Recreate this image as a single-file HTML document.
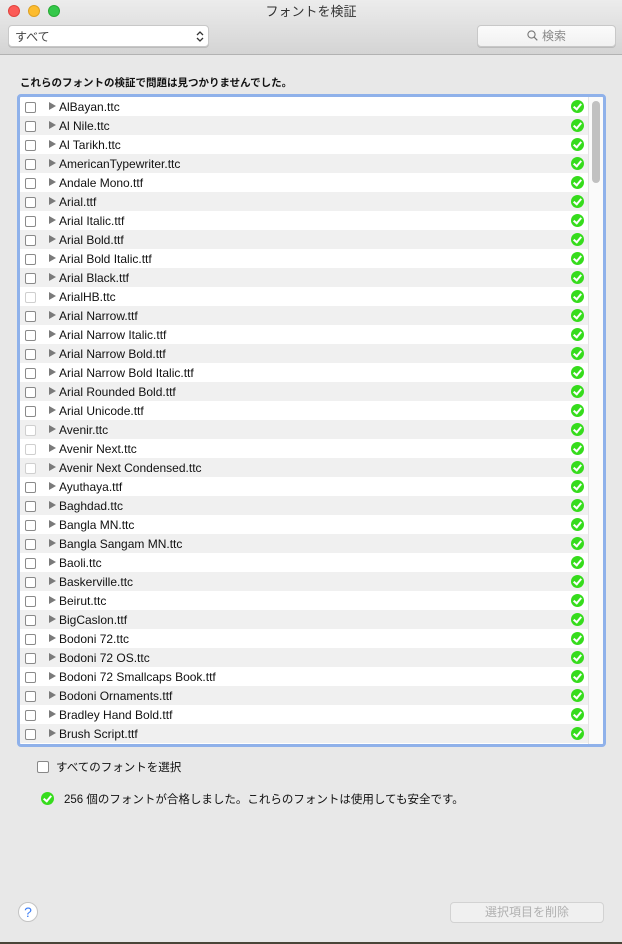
<!DOCTYPE html>
<html><head><meta charset="utf-8">
<style>
*{box-sizing:border-box;margin:0;padding:0}
body{width:622px;height:944px;background:#e8e8e8;font-family:"Liberation Sans","Noto Sans CJK JP",sans-serif;font-size:11.5px;color:#111;position:relative;overflow:hidden}
.tb{position:absolute;left:0;top:0;width:622px;height:55px;background:linear-gradient(#ececec,#d4d4d4);border-bottom:1px solid #b2b2b2}
.dot{position:absolute;top:5px;width:12px;height:12px;border-radius:50%}
.title{position:absolute;top:1px;left:0;width:622px;text-align:center;font-size:13px;color:#333}
.pop{position:absolute;left:8px;top:25px;width:201px;height:22px;background:#fff;border:1px solid #c8c8c8;border-radius:4px;box-shadow:0 1px 0 #bbb}
.search{position:absolute;left:477px;top:25px;width:139px;height:22px;background:linear-gradient(#fbfbfb,#f1f1f1);border:1px solid #c8c8c8;border-radius:4px;box-shadow:0 1px 0 #bbb;font-size:12px;color:#888;text-align:center;line-height:20px}
.head{position:absolute;left:20px;top:75px;font-size:10.5px;font-weight:bold}
.list{position:absolute;left:17px;top:94px;width:589px;height:653px;border:3px solid #8fb1ea;border-radius:4px;background:#fff;overflow:hidden}
.row{height:19px;position:relative;width:568px}
.row:nth-child(even){background:#f0f0f0}
.cb{position:absolute;left:5px;top:5px;width:11px;height:11px;border:1px solid #8a8a8a;border-radius:2px;background:#fff}
.cb.d{border-color:#cfcfcf}
.tri{position:absolute;left:29px;top:5px;width:0;height:0;border-left:7px solid #7a7a7a;border-top:4.5px solid transparent;border-bottom:4.5px solid transparent}
.nm{position:absolute;left:39px;top:3px;font-size:12px}
.ok{position:absolute;left:551px;top:3px;width:13px;height:13px;border-radius:50%;background:#36dc1c}
.ok:after,.ok2:after{content:"";position:absolute;left:4px;top:2px;width:3px;height:6px;border:solid #fff;border-width:0 2px 2px 0;transform:rotate(40deg)}
.sb{position:absolute;left:568px;top:0;width:15px;height:647px;background:#fafafa;border-left:1px solid #e4e4e4}
.th{position:absolute;left:3px;top:4px;width:8px;height:82px;border-radius:4px;background:#c1c1c1}
.ok2{position:absolute;left:41px;top:792px;width:13px;height:13px;border-radius:50%;background:#36dc1c}
</style></head><body>
<div class="tb">
<div class="dot" style="left:8px;background:#fc5b57;border:1px solid #e0443e"></div>
<div class="dot" style="left:28px;background:#fdbc2e;border:1px solid #dea123"></div>
<div class="dot" style="left:48px;background:#34c84a;border:1px solid #27aa35"></div>
<div class="title">フォントを検証</div>
<div class="pop"><span style="position:absolute;left:6px;top:2px;font-size:12px;color:#444">すべて</span>
<svg style="position:absolute;right:4px;top:4px" width="8" height="13" viewBox="0 0 8 13"><path d="M1 5 L4 2 L7 5 M1 8 L4 11 L7 8" fill="none" stroke="#333" stroke-width="1.3"/></svg></div>
<div class="search"><svg width="11" height="11" viewBox="0 0 11 11" style="vertical-align:-1px;margin-right:4px"><circle cx="4.5" cy="4.5" r="3.6" fill="none" stroke="#777" stroke-width="1.1"/><path d="M7.2 7.2 L10.3 10.3" stroke="#777" stroke-width="1.2"/></svg>検索</div>
</div>
<div class="head">これらのフォントの検証で問題は見つかりませんでした。</div>
<div class="list">
<div class="row"><i class="cb"></i><i class="tri"></i><span class="nm">AlBayan.ttc</span><i class="ok"></i></div>
<div class="row"><i class="cb"></i><i class="tri"></i><span class="nm">Al Nile.ttc</span><i class="ok"></i></div>
<div class="row"><i class="cb"></i><i class="tri"></i><span class="nm">Al Tarikh.ttc</span><i class="ok"></i></div>
<div class="row"><i class="cb"></i><i class="tri"></i><span class="nm">AmericanTypewriter.ttc</span><i class="ok"></i></div>
<div class="row"><i class="cb"></i><i class="tri"></i><span class="nm">Andale Mono.ttf</span><i class="ok"></i></div>
<div class="row"><i class="cb"></i><i class="tri"></i><span class="nm">Arial.ttf</span><i class="ok"></i></div>
<div class="row"><i class="cb"></i><i class="tri"></i><span class="nm">Arial Italic.ttf</span><i class="ok"></i></div>
<div class="row"><i class="cb"></i><i class="tri"></i><span class="nm">Arial Bold.ttf</span><i class="ok"></i></div>
<div class="row"><i class="cb"></i><i class="tri"></i><span class="nm">Arial Bold Italic.ttf</span><i class="ok"></i></div>
<div class="row"><i class="cb"></i><i class="tri"></i><span class="nm">Arial Black.ttf</span><i class="ok"></i></div>
<div class="row"><i class="cb d"></i><i class="tri"></i><span class="nm">ArialHB.ttc</span><i class="ok"></i></div>
<div class="row"><i class="cb"></i><i class="tri"></i><span class="nm">Arial Narrow.ttf</span><i class="ok"></i></div>
<div class="row"><i class="cb"></i><i class="tri"></i><span class="nm">Arial Narrow Italic.ttf</span><i class="ok"></i></div>
<div class="row"><i class="cb"></i><i class="tri"></i><span class="nm">Arial Narrow Bold.ttf</span><i class="ok"></i></div>
<div class="row"><i class="cb"></i><i class="tri"></i><span class="nm">Arial Narrow Bold Italic.ttf</span><i class="ok"></i></div>
<div class="row"><i class="cb"></i><i class="tri"></i><span class="nm">Arial Rounded Bold.ttf</span><i class="ok"></i></div>
<div class="row"><i class="cb"></i><i class="tri"></i><span class="nm">Arial Unicode.ttf</span><i class="ok"></i></div>
<div class="row"><i class="cb d"></i><i class="tri"></i><span class="nm">Avenir.ttc</span><i class="ok"></i></div>
<div class="row"><i class="cb d"></i><i class="tri"></i><span class="nm">Avenir Next.ttc</span><i class="ok"></i></div>
<div class="row"><i class="cb d"></i><i class="tri"></i><span class="nm">Avenir Next Condensed.ttc</span><i class="ok"></i></div>
<div class="row"><i class="cb"></i><i class="tri"></i><span class="nm">Ayuthaya.ttf</span><i class="ok"></i></div>
<div class="row"><i class="cb"></i><i class="tri"></i><span class="nm">Baghdad.ttc</span><i class="ok"></i></div>
<div class="row"><i class="cb"></i><i class="tri"></i><span class="nm">Bangla MN.ttc</span><i class="ok"></i></div>
<div class="row"><i class="cb"></i><i class="tri"></i><span class="nm">Bangla Sangam MN.ttc</span><i class="ok"></i></div>
<div class="row"><i class="cb"></i><i class="tri"></i><span class="nm">Baoli.ttc</span><i class="ok"></i></div>
<div class="row"><i class="cb"></i><i class="tri"></i><span class="nm">Baskerville.ttc</span><i class="ok"></i></div>
<div class="row"><i class="cb"></i><i class="tri"></i><span class="nm">Beirut.ttc</span><i class="ok"></i></div>
<div class="row"><i class="cb"></i><i class="tri"></i><span class="nm">BigCaslon.ttf</span><i class="ok"></i></div>
<div class="row"><i class="cb"></i><i class="tri"></i><span class="nm">Bodoni 72.ttc</span><i class="ok"></i></div>
<div class="row"><i class="cb"></i><i class="tri"></i><span class="nm">Bodoni 72 OS.ttc</span><i class="ok"></i></div>
<div class="row"><i class="cb"></i><i class="tri"></i><span class="nm">Bodoni 72 Smallcaps Book.ttf</span><i class="ok"></i></div>
<div class="row"><i class="cb"></i><i class="tri"></i><span class="nm">Bodoni Ornaments.ttf</span><i class="ok"></i></div>
<div class="row"><i class="cb"></i><i class="tri"></i><span class="nm">Bradley Hand Bold.ttf</span><i class="ok"></i></div>
<div class="row"><i class="cb"></i><i class="tri"></i><span class="nm">Brush Script.ttf</span><i class="ok"></i></div>
<div class="sb"><div class="th"></div></div>
</div>
<div style="position:absolute;left:37px;top:761px;width:12px;height:12px;border:1px solid #888;border-radius:2px;background:#fff"></div>
<div style="position:absolute;left:56px;top:759px;font-size:11.5px">すべてのフォントを選択</div>
<div class="ok2"></div>
<div style="position:absolute;left:64px;top:791px;font-size:11.5px">256 個のフォントが合格しました。これらのフォントは使用しても安全です。</div>
<div style="position:absolute;left:18px;top:902px;width:20px;height:20px;border-radius:50%;background:#fff;border:1px solid #c4c4c4;color:#3a7cf5;text-align:center;font-size:14px;line-height:18px">?</div>
<div style="position:absolute;left:450px;top:902px;width:154px;height:21px;border:1px solid #d2d2d2;border-radius:4px;background:#f0f0f0;color:#b0b0b0;text-align:center;font-size:12px;line-height:19px">選択項目を削除</div>
<div style="position:absolute;left:0;top:942px;width:622px;height:2px;background:#4a4538"></div>
</body></html>
